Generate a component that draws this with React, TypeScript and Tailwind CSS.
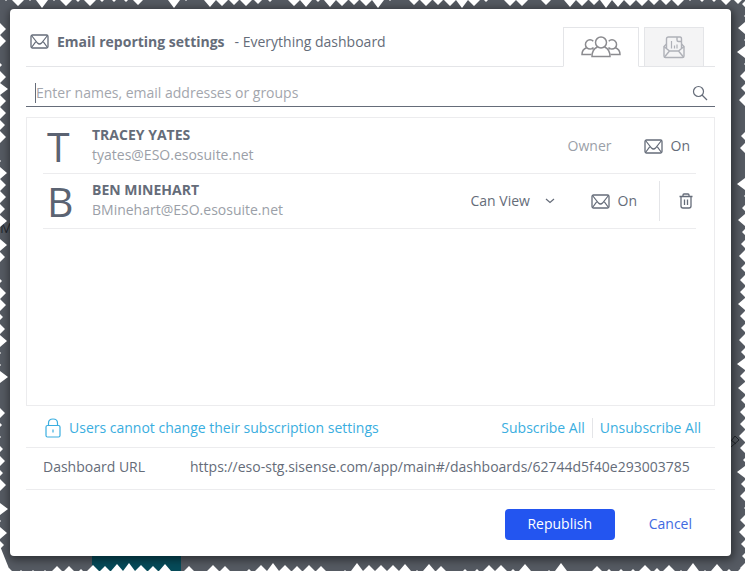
import { useState } from "react";
import clsx from "clsx";

const users = [
	{ name: "TRACEY YATES", email: "tyates@ESO.esosuite.net", isOwner: true },
	{ name: "BEN MINEHART", email: "BMinehart@ESO.esosuite.net", isOwner: false },
];

const dashboardUrl = "https://eso-stg.sisense.com/app/main#/dashboards/62744d5f40e293003785";

// depth of each tooth along the torn border, one every 12px
const topTeeth = [
	1, 6, 1, 8, 1, 6, 2, 6, 2, 2, 2, 5, 0, 0, 8, 1, 0, 7, 6, 5, 6, 4, 2, 0, 6, 7, 2, 7, 6, 5, 6, 8, 1,
	0, 5, 6, 5, 6, 8, 6, 2, 0, 6, 6, 0, 5, 0, 7, 6, 5, 8, 7, 6, 6, 5, 5, 6, 1, 2, 2, 5, 4,
];
const bottomTeeth = [
	3, 1, 1, 1, 5, 5, 2, 6, 5, 7, 8, 6, 5, 7, 0, 5, 0, 6, 5, 0, 2, 6, 8, 6, 5, 6, 5, 0, 1, 8, 6, 6, 6,
	7, 1, 7, 5, 0, 2, 2, 6, 6, 2, 7, 0, 1, 8, 0, 0, 5, 2, 2, 2, 6, 3, 6, 1, 8, 1, 7, 2, 3,
];
const leftTeeth = [
	0, 0, 6, 6, 0, 2, 6, 8, 6, 6, 5, 6, 0, 1, 7, 6, 6, 5, 7, 0, 7, 5, 0, 2, 6, 6, 3, 5, 7, 1, 1, 8, 0,
	0, 5, 2, 1, 3, 5, 3, 6, 0, 8, 1, 7, 4,
];
const rightTeeth = [
	3, 1, 7, 1, 8, 1, 5, 4, 6, 0, 0, 4, 5, 0, 0, 8, 1, 3, 7, 3, 4, 6, 4, 5, 5, 7, 5, 4, 6, 4, 8, 5, 7,
	4, 5, 5, 6, 5, 2, 8, 4, 5, 1, 5, 6, 4, 3, 5,
];

const teethPath = (teeth: number[], start: number, vertical = false) =>
	teeth
		.map((depth, i) => {
			const c = start + i * 12;
			const half = Math.min(6, depth);
			return vertical
				? `M0 ${c - half}L${depth} ${c}L0 ${c + half}Z`
				: `M${c - half} 0L${c} ${depth}L${c + half} 0Z`;
		})
		.join("");

const TornBorder = () => (
	<div aria-hidden="true" className="pointer-events-none absolute inset-0 overflow-hidden text-white">
		<svg width="745" height="10" fill="currentColor" className="absolute top-0 left-0">
			<path d={teethPath(topTeeth, 6)} />
		</svg>
		<svg width="745" height="10" fill="currentColor" className="absolute bottom-0 left-0 -scale-y-100">
			<path d={teethPath(bottomTeeth, 9)} />
		</svg>
		<svg width="12" height="571" fill="currentColor" className="absolute top-0 left-0">
			<path d={teethPath(leftTeeth, 5, true)} />
			<path d="M0 546L10 571H0Z" />
		</svg>
		<svg width="10" height="571" fill="currentColor" className="absolute top-0 right-0 -scale-x-100">
			<path d={teethPath(rightTeeth, 4, true)} />
		</svg>
	</div>
);

const MailIcon = () => (
	<svg width="19" height="15" viewBox="0 0 19 15" fill="none" stroke="currentColor" className="shrink-0">
		<rect x="1" y="1" width="17" height="13" rx="1.5" strokeWidth="1.3" />
		<path
			d="M1.5 1.5L7.5 9Q9.500 11 11.500 9L17.500 1.500M1.5 13.500L6 7.300M17.500 13.500L13 7.300"
			strokeWidth="1.2"
		/>
	</svg>
);

const GroupIcon = () => (
	<svg width="40" height="22" viewBox="0 0 40 22" fill="none" stroke="currentColor" strokeWidth="1.5">
		<circle cx="20" cy="6.500" r="5.500" />
		<path d="M16.500 11C13 12.500 11 15.500 11 20.500H29C29 15.500 27 12.500 23.500 11" />
		<path d="M12.500 11.500A4.600 4.600 0 1 1 12.300 5.200M5.500 11.800C2.500 13 1 15 1 18.500H10.500M10.500 12.200L12.500 13.200" />
		<path d="M27.500 11.500A4.600 4.600 0 1 0 27.700 5.200M34.500 11.800C37.500 13 39 15 39 18.500H29.500M29.500 12.200L27.500 13.200" />
	</svg>
);

const ReportIcon = () => (
	<svg width="22" height="23" viewBox="0 0 22 23" fill="none" stroke="currentColor" strokeWidth="1.4">
		<path d="M3.500 12V3Q3.500 1 5.500 1H17Q18.500 1 18.500 3V12M14 1V4Q14 5.500 15.500 5.500H18.500" />
		<path d="M3.500 8L1 10.500V20Q1 21.500 2.500 21.500H19.500Q21 21.500 21 20V10.500L18.500 8" />
		<path d="M1 10.500L6.500 15H15.500L21 10.500M1.500 21L6.500 15M20.500 21L15.500 15" />
		<path d="M8.500 5V12.500M11.500 9.500V12.500M14 8.500V12.500" strokeWidth="1.2" />
	</svg>
);

const SearchIcon = () => (
	<svg width="16" height="16" viewBox="0 0 16 16" fill="none" stroke="currentColor" strokeWidth="1.2">
		<circle cx="6.500" cy="6.500" r="5" />
		<path d="M10 10L15 15" />
	</svg>
);

const TrashIcon = () => (
	<svg width="14" height="16" viewBox="0 0 14 16" fill="none" stroke="currentColor" strokeWidth="1.3">
		<path d="M0.500 3.500H13.500M4 3.500V2Q4 1 5 1H9Q10 1 10 2V3.500M2 3.500V13Q2 15 4 15H10Q12 15 12 13V3.500M5.500 6.500V12M8.500 6.500V12" />
	</svg>
);

const LockIcon = () => (
	<svg width="16" height="20" viewBox="0 0 16 20" fill="none" stroke="currentColor" strokeWidth="1.2">
		<rect x="1" y="7.500" width="14" height="11.500" rx="1.500" />
		<path d="M3.500 7.500V5Q3.500 1 8 1T12.500 5V7.500M8 11.500V14.500" />
	</svg>
);

type User = (typeof users)[number];

const UserRow = ({ user }: { user: User }) => (
	<li className="flex h-[55px] items-center border-b border-[#ececee]">
		<span className="w-[49px] pl-1 text-[41px] leading-[50px] text-[#5b6372]">{user.name[0]}</span>
		<div className="flex-1 pb-0.5">
			<p className="leading-5 font-bold">{user.name}</p>
			<p className="leading-5 text-[#9b9fa8]">{user.email}</p>
		</div>
		{user.isOwner ? (
			<span className="mr-8 text-[#9b9fa8]">Owner</span>
		) : (
			<label className="relative mr-9 flex items-center">
				<select aria-label="Permission" className="w-[84px] appearance-none bg-transparent">
					<option>Can View</option>
					<option>Can Edit</option>
				</select>
				<svg
					width="10"
					height="6"
					viewBox="0 0 10 6"
					fill="none"
					stroke="currentColor"
					strokeWidth="1.2"
					className="pointer-events-none absolute right-0"
				>
					<path d="M1 1L5 4.500L9 1" />
				</svg>
			</label>
		)}
		<button type="button" className={clsx("flex items-center gap-2", user.isOwner && "mr-1.5")}>
			<MailIcon />
			On
		</button>
		{!user.isOwner && (
			<button
				type="button"
				aria-label="Remove user"
				className="ml-[22px] flex h-10 items-center border-l border-[#e4e5e8] pr-[3px] pl-[19px]"
			>
				<TrashIcon />
			</button>
		)}
	</li>
);

export default function App() {
	const [tab, setTab] = useState("users");

	return (
		<main className="relative flex min-h-screen flex-col bg-[#555a62] pt-[9px] pr-[14px] pb-[15px] pl-[10px] font-['Open_Sans',sans-serif] text-sm text-[#656c79]">
			<div aria-hidden="true" className="absolute bottom-0 left-[92px] h-5 w-[89px] bg-[#064b59]" />
			<span aria-hidden="true" className="absolute top-[218px] left-0 text-[#23272d]">
				M
			</span>
			<svg
				aria-hidden="true"
				width="12"
				height="14"
				viewBox="0 0 12 14"
				fill="none"
				stroke="#23272d"
				className="absolute top-[434px] right-[5px]"
			>
				<path d="M0 11L7 2L11 6L3 13M3 6L8 10" />
			</svg>
			<section className="relative flex flex-1 flex-col rounded bg-white px-4 shadow-[1px_2px_9px_2px_rgba(0,0,0,0.45)]">
				<header className="flex h-[58px] items-end">
					<div className="flex h-full flex-1 items-center border-b border-[#e4e5e8] pt-2 pl-1">
						<MailIcon />
						<h1 className="ml-2 font-bold">Email reporting settings</h1>
						<span className="ml-2.5">- Everything dashboard</span>
					</div>
					<button
						type="button"
						aria-label="Users"
						onClick={() => setTab("users")}
						className={clsx(
							"flex h-10 w-[76px] items-center justify-center border border-[#e4e5e8] text-[#8b8b8f]",
							tab === "users" ? "border-b-white" : "bg-[#f4f4f5]",
						)}
					>
						<GroupIcon />
					</button>
					<div className="h-10 w-[5px] border-b border-[#e4e5e8]" />
					<button
						type="button"
						aria-label="Report"
						onClick={() => setTab("report")}
						className={clsx(
							"flex h-10 w-[60px] items-center justify-center border border-[#e4e5e8] text-[#afb1b8]",
							tab === "report" ? "border-b-white" : "bg-[#f4f4f5]",
						)}
					>
						<ReportIcon />
					</button>
					<div className="h-10 w-[11px] border-b border-[#e4e5e8]" />
				</header>

				<label className="flex h-10 items-center border-b border-[#656c79] pt-3 pr-[7px] pl-[9px]">
					<span className="h-5 w-px bg-[#656c79]" />
					<input
						type="text"
						aria-label="Share with"
						placeholder="Enter names, email addresses or groups"
						className="flex-1 outline-none placeholder:text-[#a3a6ad]"
					/>
					<SearchIcon />
				</label>

				<ul className="mt-2.5 min-h-[289px] flex-1 border border-[#ececee] pt-px pr-[18px] pl-4">
					{users.map((user) => (
						<UserRow key={user.name} user={user} />
					))}
				</ul>

				<div className="flex h-[42px] items-center border-b border-[#ececee] pt-0.5 pr-3.5 pl-[19px] text-[#3aaee0]">
					<button type="button" className="flex items-center gap-2">
						<LockIcon />
						Users cannot change their subscription settings
					</button>
					<button type="button" className="ml-auto border-r border-[#e4e5e8] pr-[7px]">
						Subscribe All
					</button>
					<button type="button" className="pl-[7px]">
						Unsubscribe All
					</button>
				</div>

				<label className="flex h-[42px] items-center border-b border-[#ececee] pr-[18px] pb-1 pl-[17px]">
					<span className="w-[147px]">Dashboard URL</span>
					<input type="text" readOnly value={dashboardUrl} className="min-w-0 flex-1 outline-none" />
				</label>

				<footer className="flex items-center justify-end gap-6 pt-[19px] pr-[13px] pb-4">
					<button
						type="button"
						className="h-[31px] w-[110px] rounded bg-[#2355f0] pb-0.5 font-medium text-white"
					>
						Republish
					</button>
					<button type="button" className="px-2.5 pb-0.5 text-[#4169df]">
						Cancel
					</button>
				</footer>
			</section>
			<TornBorder />
		</main>
	);
}
